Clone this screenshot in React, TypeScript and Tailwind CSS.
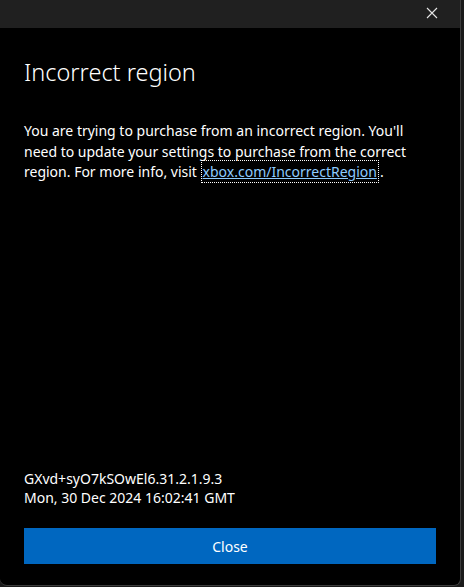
import React from "react";

export default function App() {
  return (
    <div className="w-[464px] h-[587px] bg-[#1a1a1a] overflow-hidden" style={{ fontFamily: '"Noto Sans", "Open Sans", sans-serif' }}>
      <div className="w-[461px] h-[586px] bg-black border-r border-b border-[#3c3c3c] rounded-b-[7px] flex flex-col overflow-hidden">
        <div className="h-[28px] bg-[#202020] flex items-center justify-end pr-[22px] shrink-0">
          <svg width="12" height="12" viewBox="0 0 12 12" className="mt-[-3px]">
            <path d="M1 1 L11 11 M11 1 L1 11" stroke="#e6e6e6" strokeWidth="1.1" />
          </svg>
        </div>
        <div className="flex-1 flex flex-col px-[24px]">
          <h1 className="mt-[27px] text-[23.5px] leading-[34px] font-light text-white">Incorrect region</h1>
          <p className="mt-[32px] text-[14px] leading-[20.5px] text-white pr-[20px]">
            You are trying to purchase from an incorrect region. You'll need to update your settings to purchase from the correct region. For more info, visit{" "}
            <a className="ml-[2px] text-[#8ecbff] underline outline-1 outline-dotted outline-white outline-offset-[1px]">xbox.com/IncorrectRegion</a>
            <span className="ml-[3px]">.</span>
          </p>
          <div className="flex-1" />
          <div className="text-[14px] leading-[18.5px] text-white">
            <div>GXvd+syO7kSOwEl6.31.2.1.9.3</div>
            <div>Mon, 30 Dec 2024 16:02:41 GMT</div>
          </div>
          <button className="mt-[21px] mb-[21px] h-[36px] w-[412px] bg-[#0067c0] text-white text-[14px] flex items-center justify-center">
            Close
          </button>
        </div>
      </div>
    </div>
  );
}
